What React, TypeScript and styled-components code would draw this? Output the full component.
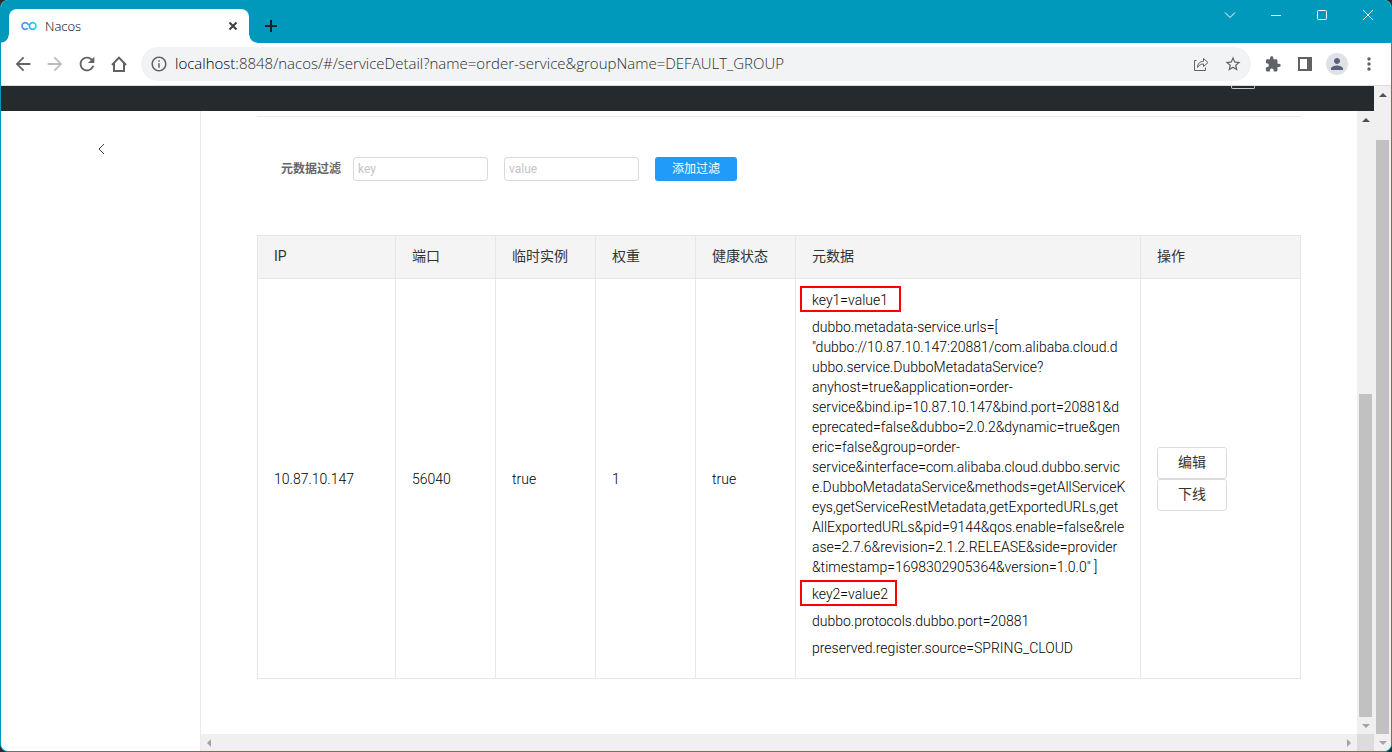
import React from 'react';
import styled, { createGlobalStyle, css } from 'styled-components';

const GlobalStyle = createGlobalStyle`
  * { box-sizing: border-box; }
  body {
    margin: 0;
    background: #2b2b30;
    color: #000;
    font-family: Roboto, 'Noto Sans CJK SC', sans-serif;
    font-size: 14px;
    font-weight: 300;
    line-height: 20px;
  }
  button, input { font: inherit; color: inherit; }
`;

const UI_FONT = "'Open Sans', 'Noto Sans', sans-serif";

const BrowserWindow = styled.div`
  display: flex;
  flex-direction: column;
  min-height: 100vh;
  overflow: hidden;
  border: solid #0099bc;
  border-width: 0 1px 1px;
  border-radius: 8px;
  background: #fff;
`;

const TabStrip = styled.header`
  display: flex;
  height: 43px;
  padding-left: 8px;
  background: #0099bc;
`;

const Tab = styled.div`
  position: relative;
  display: flex;
  align-items: center;
  width: 240px;
  margin-top: 9px;
  padding: 0 8px 0 12px;
  border-radius: 8px 8px 0 0;
  background: #fff;

  &::before, &::after {
    content: '';
    position: absolute;
    bottom: 0;
    width: 8px;
    height: 8px;
  }
  &::before {
    right: 100%;
    background: radial-gradient(circle at 0 0, #0099bc 7px, #fff 8px);
  }
  &::after {
    left: 100%;
    background: radial-gradient(circle at 100% 0, #0099bc 7px, #fff 8px);
  }
`;

const TabTitle = styled.span`
  flex: 1;
  margin-left: 8px;
  color: #000;
  font: 300 13px/18px ${UI_FONT};
`;

const IconButton = styled.button<{ $w?: number; $h?: number }>`
  display: flex;
  flex: none;
  align-items: center;
  justify-content: center;
  width: ${(p) => p.$w ?? 32}px;
  height: ${(p) => p.$h ?? 32}px;
  padding: 0;
  border: 0;
  background: none;
`;

const NewTab = styled(IconButton)`
  margin: 10px auto 0 6px;
`;

const Toolbar = styled.nav`
  display: flex;
  align-items: center;
  height: 43px;
  padding: 0 6px;
  border-bottom: 1px solid #dadce0;
`;

const AddressBar = styled.div`
  display: flex;
  flex: 1;
  align-items: center;
  min-width: 0;
  height: 34px;
  margin: 0 6px;
  padding: 0 2px 0 9px;
  border-radius: 17px;
  background: #f1f3f4;
`;

const Url = styled.div`
  flex: 1;
  min-width: 0;
  margin-left: 7px;
  padding-bottom: 2px;
  overflow: hidden;
  color: #2b2e31;
  font: 300 15px/20px ${UI_FONT};
  white-space: nowrap;
`;

const Host = styled.span`
  color: #000;
`;

const Avatar = styled.span`
  display: flex;
  align-items: center;
  justify-content: center;
  width: 22px;
  height: 22px;
  border-radius: 50%;
  background: #dee1e6;
`;

const Viewport = styled.div`
  display: flex;
  flex: 1;
`;

const Page = styled.div`
  display: flex;
  flex: 1;
  flex-direction: column;
  min-width: 0;
`;

const SiteHeader = styled.div`
  display: flex;
  justify-content: flex-end;
  height: 25px;
  padding-right: 119px;
  background: #252a2f;
`;

const LanguageEdge = styled.div`
  width: 24px;
  height: 3px;
  border: 1px solid #c8cacb;
  border-top: 0;
  border-radius: 0 0 2px 2px;
`;

const Body = styled.div`
  display: flex;
  flex: 1;
`;

const Sidebar = styled.aside`
  display: flex;
  flex: none;
  align-items: flex-start;
  justify-content: center;
  width: 200px;
  padding-top: 28px;
  border-right: 1px solid #ebebeb;
`;

const ScrollArea = styled.div`
  display: flex;
  flex: 1;
  flex-direction: column;
  min-width: 0;
`;

const ScrollRow = styled.div<{ $grow?: boolean }>`
  display: flex;
  flex: ${(p) => (p.$grow ? 1 : 'none')};
`;

const Main = styled.main`
  flex: 1;
  min-width: 0;
  padding: 5px 56px 55px;
`;

const Rule = styled.hr`
  height: 1px;
  margin: 0 0 40px;
  border: 0;
  background: #ebebeb;
`;

const FilterForm = styled.form`
  display: flex;
  align-items: center;
  gap: 16px;
  margin-bottom: 54px;
  padding-left: 24px;
  font-size: 12px;
`;

const FilterLabel = styled.label`
  display: flex;
  align-items: center;
  gap: 12px;
  color: #666;
  font-weight: 700;
`;

const FilterInput = styled.input`
  width: 135px;
  height: 24px;
  padding: 0 4px;
  border: 1px solid #d9d9d9;
  border-radius: 3px;
  background: #fff;
  font-weight: 400;
  &::placeholder { color: #c4c4c4; }
`;

const PrimaryButton = styled.button`
  width: 82px;
  height: 24px;
  padding: 0;
  border: 0;
  border-radius: 3px;
  background: #209bfa;
  color: #fff;
  font-weight: 400;
`;

const InstanceTable = styled.table`
  width: 100%;
  table-layout: fixed;
  border: solid #e6e6e6;
  border-width: 1px 0 0 1px;
  border-collapse: separate;
  border-spacing: 0;
`;

const Col = styled.col<{ $w?: number }>`
  ${(p) => p.$w && css`width: ${p.$w}px;`}
`;

const cell = css`
  border: solid #e6e6e6;
  border-width: 0 1px 1px 0;
  text-align: left;
`;

const HeadCell = styled.th`
  ${cell}
  height: 43px;
  padding: 0 16px 2px;
  background: #f4f4f4;
  color: #333;
  font-weight: 400;
`;

const Cell = styled.td`
  ${cell}
  padding: 11px 16px;
`;

const MetaCell = styled(Cell)`
  padding-right: 8px;
  padding-bottom: 20px;
`;

const MetaLine = styled.p`
  position: relative;
  margin: 0;
  overflow-wrap: break-word;
  white-space: pre-line;
  & + & { margin-top: 7px; }
`;

const Highlight = styled.span<{ $w: number }>`
  position: absolute;
  top: -4px;
  left: -12px;
  width: ${(p) => p.$w}px;
  height: 26px;
  border: 2px solid #f00;
`;

const RowButton = styled.button`
  display: block;
  width: 70px;
  height: 32px;
  padding: 0 0 2px;
  border: 1px solid #dcdcdc;
  border-radius: 3px;
  background: #fff;
  color: #333;
  font-weight: 400;
`;

const VBar = styled.div`
  display: flex;
  flex: none;
  flex-direction: column;
  width: 17px;
  background: #f0f0f0;
`;

const HBar = styled.div`
  display: flex;
  flex: 1;
  justify-content: space-between;
  height: 17px;
  background: #f0f0f0;
`;

const Corner = styled.div`
  width: 17px;
  height: 17px;
  background: #dcdcdc;
`;

const Gap = styled.div<{ $grow: number }>`
  flex: ${(p) => p.$grow} 1 0;
`;

const Thumb = styled(Gap)`
  margin: 0 2px;
  background: #c1c1c1;
`;

const Icon = ({ d, size = 20, color = '#5f6368' }: { d: string; size?: number; color?: string }) => (
  <svg width={size} height={size} viewBox="0 0 24 24" fill={color} aria-hidden="true">
    <path d={d} />
  </svg>
);

const Stroke = ({ d, size = 16, color = '#5f6368', width = 1 }: { d: string; size?: number; color?: string; width?: number }) => (
  <svg width={size} height={size} viewBox={`0 0 ${size} ${size}`} fill="none" stroke={color} strokeWidth={width} aria-hidden="true">
    <path d={d} />
  </svg>
);

const arrows = {
  up: 'M5 11L9 7L13 11Z',
  down: 'M5 7L9 11L13 7Z',
  left: 'M10 5L6 9L10 13Z',
  right: 'M7 5L11 9L7 13Z',
};

const Arrow = ({ dir, dim }: { dir: keyof typeof arrows; dim?: boolean }) => (
  <IconButton $w={17} $h={17} aria-label={`Scroll ${dir}`}>
    <svg width="17" height="17" viewBox="0 0 17 17" fill={dim ? '#a3a3a3' : '#505050'}>
      <path d={arrows[dir]} />
    </svg>
  </IconButton>
);

const VScroll = ({ before, thumb }: { before: number; thumb: number }) => (
  <VBar>
    <Arrow dir="up" />
    <Gap $grow={before} />
    <Thumb $grow={thumb} />
    <Arrow dir="down" dim />
  </VBar>
);

const serviceUrls = [
  'dubbo.metadata-service.urls=[',
  '"dubbo://10.87.10.147:20881/com.alibaba.cloud.d',
  'ubbo.service.DubboMetadataService?',
  'anyhost=true&application=order-',
  'service&bind.ip=10.87.10.147&bind.port=20881&d',
  'eprecated=false&dubbo=2.0.2&dynamic=true&gen',
  'eric=false&group=order-',
  'service&interface=com.alibaba.cloud.dubbo.servic',
  'e.DubboMetadataService&methods=getAllServiceK',
  'eys,getServiceRestMetadata,getExportedURLs,get',
  'AllExportedURLs&pid=9144&qos.enable=false&rele',
  'ase=2.7.6&revision=2.1.2.RELEASE&side=provider',
  '&timestamp=1698302905364&version=1.0.0" ]',
].join('\n');

const metadata: { text: string; mark?: number }[] = [
  { text: 'key1=value1', mark: 101 },
  { text: serviceUrls },
  { text: 'key2=value2', mark: 97 },
  { text: 'dubbo.protocols.dubbo.port=20881' },
  { text: 'preserved.register.source=SPRING_CLOUD' },
];

const columns: { title: string; width?: number }[] = [
  { title: 'IP', width: 138 },
  { title: '端口', width: 100 },
  { title: '临时实例', width: 100 },
  { title: '权重', width: 100 },
  { title: '健康状态', width: 100 },
  { title: '元数据' },
  { title: '操作', width: 160 },
];

export default function App() {
  return (
    <>
      <GlobalStyle />
      <BrowserWindow>
        <TabStrip>
          <Tab>
            <svg width="16" height="16" viewBox="0 0 16 16" fill="none" strokeWidth="1.7" aria-hidden="true">
              <defs>
                <linearGradient id="nacos" x1="0" y1="0" x2="16" y2="0" gradientUnits="userSpaceOnUse">
                  <stop offset="0" stopColor="#5a8cf8" />
                  <stop offset="0.5" stopColor="#35a5f5" />
                  <stop offset="1" stopColor="#1ce0f2" />
                </linearGradient>
              </defs>
              <path stroke="url(#nacos)" d="M6.8 10.2C6.2 10.9 5.4 11.3 4.3 11.3A3.300 3.300 0 0 1 4.300 4.700C5.900 4.700 6.900 5.600 7.700 6.900M11.700 4.700A3.300 3.300 0 1 1 11.700 11.300A3.300 3.300 0 1 1 11.700 4.700Z" />
            </svg>
            <TabTitle>Nacos</TabTitle>
            <IconButton $w={16} $h={16} aria-label="Close tab">
              <Stroke d="M4.5 4.5L11.5 11.5M11.5 4.5L4.5 11.5" color="#3c4043" width={2} />
            </IconButton>
          </Tab>
          <NewTab aria-label="New tab">
            <Stroke d="M8 2V14M2 8H14" color="#202124" width={2} />
          </NewTab>
          <IconButton $w={46} $h={30} aria-label="Search tabs">
            <Stroke d="M3 5.5L8 10.5L13 5.5" color="#fff" />
          </IconButton>
          <IconButton $w={46} $h={30} aria-label="Minimize">
            <Stroke d="M3 8.5H13" color="#fff" />
          </IconButton>
          <IconButton $w={46} $h={30} aria-label="Maximize">
            <Stroke d="M4.5 3.5H11.5Q12.5 3.5 12.5 4.5V11.5Q12.5 12.5 11.5 12.5H4.5Q3.5 12.5 3.5 11.5V4.5Q3.5 3.5 4.5 3.5Z" color="#fff" />
          </IconButton>
          <IconButton $w={46} $h={30} aria-label="Close">
            <Stroke d="M3 3L13 13M13 3L3 13" color="#fff" />
          </IconButton>
        </TabStrip>

        <Toolbar>
          <IconButton aria-label="Back">
            <Icon size={22} d="M20 11H7.83l5.59-5.59L12 4l-8 8 8 8 1.41-1.41L7.83 13H20v-2z" />
          </IconButton>
          <IconButton aria-label="Forward">
            <Icon size={22} color="#babcbe" d="M12 4l-1.41 1.41L16.17 11H4v2h12.17l-5.58 5.59L12 20l8-8z" />
          </IconButton>
          <IconButton aria-label="Reload">
            <Icon size={22} d="M17.65 6.35A7.958 7.958 0 0 0 12 4c-4.42 0-7.99 3.58-7.99 8s3.57 8 7.99 8c3.73 0 6.84-2.55 7.73-6h-2.08A5.99 5.99 0 0 1 12 18c-3.31 0-6-2.69-6-6s2.69-6 6-6c1.66 0 3.14.69 4.22 1.78L13 11h7V4l-2.35 2.35z" />
          </IconButton>
          <IconButton aria-label="Home">
            <Stroke size={18} width={2} d="M2 10L9 2.6L16 10M4 8.5V16H14V8.5" />
          </IconButton>
          <AddressBar>
            <Icon size={18} d="M11 7h2v2h-2zm0 4h2v6h-2zm1-9C6.48 2 2 6.48 2 12s4.48 10 10 10 10-4.48 10-10S17.52 2 12 2zm0 18c-4.41 0-8-3.59-8-8s3.59-8 8-8 8 3.59 8 8-3.59 8-8 8z" />
            <Url>
              <Host>localhost</Host>:8848/nacos/#/serviceDetail?name=order-service&amp;groupName=DEFAULT_GROUP
            </Url>
            <IconButton aria-label="Share">
              <Stroke d="M3.5 4.5H1.5V14.5H12.5V11.5M4.5 11.5C4.5 7.5 7 5.5 10.5 5.3V2.5L15 6.5L10.5 10.5V8C8 8 6 9 4.5 11.5Z" />
            </IconButton>
            <IconButton aria-label="Bookmark">
              <Icon size={18} d="M22 9.24l-7.19-.62L12 2 9.19 8.63 2 9.24l5.46 4.73L5.82 21 12 17.27 18.18 21l-1.63-7.03L22 9.24zM12 15.4l-3.76 2.27 1-4.28-3.32-2.88 4.38-.38L12 6.1l1.71 4.04 4.38.38-3.32 2.88 1 4.28L12 15.4z" />
            </IconButton>
          </AddressBar>
          <IconButton aria-label="Extensions">
            <Icon size={18} d="M20 11.500H18V7.500c0-1.100-.9-2-2-2h-3.500V4C12.500 2.620 11.600 1.800 10.300 1.800S8.100 2.620 8.100 4V5.500H4.500c-1.100 0-1.990.9-1.990 2v3.500H3.800c1.490 0 2.700 1.110 2.700 2.600s-1.210 2.600-2.700 2.600H2.500V20c0 1.100.9 2 2 2h3.300v-1.300c0-1.490 1.210-2.700 2.600-2.700 1.490 0 2.600 1.210 2.600 2.700V22H16c1.100 0 2-.9 2-2v-4h2c1.380 0 2.300-.95 2.300-2.250S21.380 11.500 20 11.500z" />
          </IconButton>
          <IconButton aria-label="Side panel">
            <svg width="14" height="14" viewBox="0 0 14 14" fill="#5f6368" fillRule="evenodd">
              <path d="M0 0H14V14H0ZM2 2V12H9V2Z" />
            </svg>
          </IconButton>
          <IconButton aria-label="Profile">
            <Avatar>
              <Icon size={18} color="#56637a" d="M12 12c2.210 0 4-1.790 4-4s-1.790-4-4-4-4 1.790-4 4 1.790 4 4 4zm0 2c-2.670 0-8 1.340-8 4v2h16v-2c0-2.660-5.330-4-8-4z" />
            </Avatar>
          </IconButton>
          <IconButton aria-label="Menu">
            <Icon size={20} d="M12 8c1.100 0 2-.9 2-2s-.9-2-2-2-2 .9-2 2 .9 2 2 2zm0 2c-1.100 0-2 .9-2 2s.9 2 2 2 2-.9 2-2-.9-2-2-2zm0 6c-1.100 0-2 .9-2 2s.9 2 2 2 2-.9 2-2-.9-2-2-2z" />
          </IconButton>
        </Toolbar>

        <Viewport>
          <Page>
            <SiteHeader>
              <LanguageEdge />
            </SiteHeader>
            <Body>
              <Sidebar>
                <IconButton $w={20} $h={20} aria-label="Back to list">
                  <Stroke d="M11 3L6 8L11 13" color="#444" />
                </IconButton>
              </Sidebar>
              <ScrollArea>
                <ScrollRow $grow>
                  <Main>
                    <Rule />
                    <FilterForm onSubmit={(e) => e.preventDefault()}>
                      <FilterLabel>
                        元数据过滤
                        <FilterInput placeholder="key" />
                      </FilterLabel>
                      <FilterInput placeholder="value" aria-label="value" />
                      <PrimaryButton type="submit">添加过滤</PrimaryButton>
                    </FilterForm>
                    <InstanceTable>
                      <colgroup>
                        {columns.map((c) => <Col key={c.title} $w={c.width} />)}
                      </colgroup>
                      <thead>
                        <tr>
                          {columns.map((c) => <HeadCell key={c.title}>{c.title}</HeadCell>)}
                        </tr>
                      </thead>
                      <tbody>
                        <tr>
                          <Cell>10.87.10.147</Cell>
                          <Cell>56040</Cell>
                          <Cell>true</Cell>
                          <Cell>1</Cell>
                          <Cell>true</Cell>
                          <MetaCell>
                            {metadata.map((m) => (
                              <MetaLine key={m.text}>
                                {m.text}
                                {m.mark && <Highlight $w={m.mark} />}
                              </MetaLine>
                            ))}
                          </MetaCell>
                          <Cell>
                            <RowButton>编辑</RowButton>
                            <RowButton>下线</RowButton>
                          </Cell>
                        </tr>
                      </tbody>
                    </InstanceTable>
                  </Main>
                  <VScroll before={266} thumb={323} />
                </ScrollRow>
                <ScrollRow>
                  <HBar>
                    <Arrow dir="left" dim />
                    <Arrow dir="right" dim />
                  </HBar>
                  <Corner />
                </ScrollRow>
              </ScrollArea>
            </Body>
          </Page>
          <VScroll before={37} thumb={594} />
        </Viewport>
      </BrowserWindow>
    </>
  );
}
